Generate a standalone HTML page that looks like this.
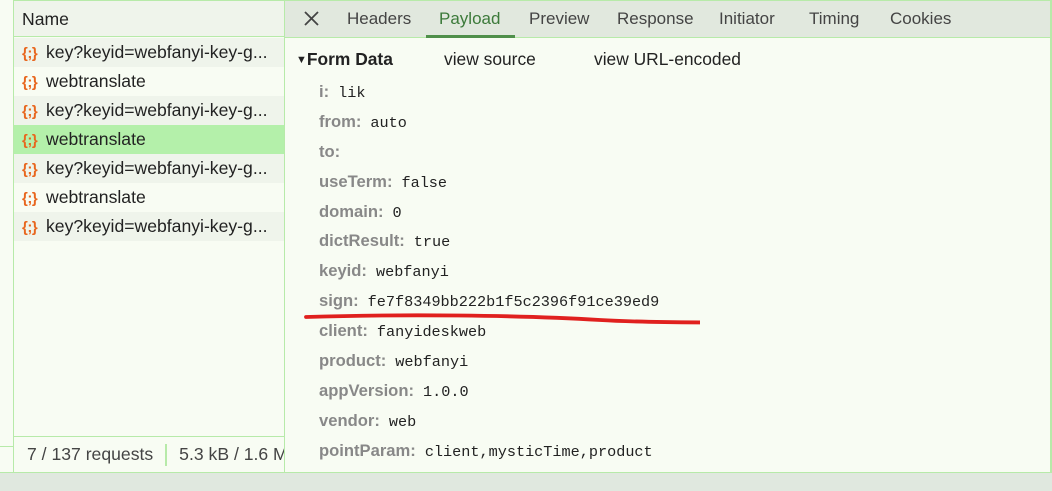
<!DOCTYPE html>
<html><head><meta charset="utf-8"><style>
*{margin:0;padding:0;box-sizing:border-box}
body{width:1052px;height:491px;overflow:hidden;background:#f8fcf3;font-family:"Liberation Sans",sans-serif;position:relative;color:#222}
.a{position:absolute}
.row{position:absolute;left:14px;width:270px;height:29px;font-size:17.6px;line-height:29px;padding-left:8px;white-space:nowrap;color:#222;overflow:hidden}
.row .ic{display:inline-block;width:24px;color:#e8661e;font-size:15px;font-weight:bold;letter-spacing:-0.5px}
.tab{position:absolute;top:0;height:37px;line-height:37px;font-size:17px;color:#444}
.k{position:absolute;left:319px;font-size:16.6px;font-weight:bold;color:#888;white-space:nowrap}
.k span{font-family:"Liberation Mono",monospace;font-weight:normal;color:#222;font-size:15.2px;margin-left:9px}
</style></head><body>
<div class="a" style="left:13px;top:0;width:272px;height:472px;border-left:1px solid #b7eaa9;border-right:1px solid #b7eaa9;border-top:1px solid #b7eaa9"></div>
<div class="a" style="left:14px;top:1px;width:270px;height:36px;background:#eff4eb;border-bottom:1px solid #b7eaa9;font-size:17.6px;line-height:36px;padding-left:8px">Name</div>
<div class="row" style="top:38px;background:#eff4eb"><span class="ic">{;}</span>key?keyid=webfanyi-key-g...</div>
<div class="row" style="top:67px;background:#f8fcf3"><span class="ic">{;}</span>webtranslate</div>
<div class="row" style="top:96px;background:#eff4eb"><span class="ic">{;}</span>key?keyid=webfanyi-key-g...</div>
<div class="row" style="top:125px;background:#b4f0aa"><span class="ic">{;}</span>webtranslate</div>
<div class="row" style="top:154px;background:#eff4eb"><span class="ic">{;}</span>key?keyid=webfanyi-key-g...</div>
<div class="row" style="top:183px;background:#f8fcf3"><span class="ic">{;}</span>webtranslate</div>
<div class="row" style="top:212px;background:#eff4eb"><span class="ic">{;}</span>key?keyid=webfanyi-key-g...</div>
<div class="a" style="left:0;top:446px;width:14px;border-top:1px solid #b7eaa9"></div>
<div class="a" style="left:14px;top:436px;width:270px;height:36px;border-top:1px solid #b7eaa9;font-size:17.6px;line-height:35px;color:#444;white-space:nowrap;overflow:hidden;padding-left:13px">7 / 137 requests<span style="display:inline-block;width:2px;height:22px;background:#b7eaa9;vertical-align:middle;margin:0 12px"></span>5.3 kB / 1.6 MB</div>
<div class="a" style="left:0;top:472px;width:1052px;height:19px;background:#e0e8df;border-top:1px solid #b7eaa9"></div>
<div class="a" style="left:285px;top:0;width:767px;height:38px;background:#e1e8de;border-top:1px solid #b7eaa9;border-bottom:1px solid #b7eaa9"></div>
<div class="a" style="left:1050px;top:0;width:2px;height:472px;background:#b7eaa9"></div>
<svg class="a" style="left:304px;top:11px" width="15" height="15"><path d="M1 1L14 14M14 1L1 14" stroke="#444" stroke-width="1.8"/></svg>
<div class="tab" style="left:347px">Headers</div>
<div class="tab" style="left:439px;color:#3c7a3a">Payload</div>
<div class="a" style="left:426px;top:35px;width:89px;height:3px;background:#4f8f4a"></div>
<div class="tab" style="left:529px">Preview</div>
<div class="tab" style="left:617px">Response</div>
<div class="tab" style="left:719px">Initiator</div>
<div class="tab" style="left:809px">Timing</div>
<div class="tab" style="left:890px">Cookies</div>
<div class="a" style="left:296px;top:49px;font-size:17.4px;font-weight:bold;color:#222;white-space:nowrap"><span style="font-size:11px;vertical-align:2px">▼</span>Form Data</div>
<div class="a" style="left:444px;top:49px;font-size:17.4px;color:#222">view source</div>
<div class="a" style="left:594px;top:49px;font-size:17.4px;color:#222">view URL-encoded</div>
<div class="k" style="top:82px">i:<span>lik</span></div>
<div class="k" style="top:112px">from:<span>auto</span></div>
<div class="k" style="top:142px">to:<span></span></div>
<div class="k" style="top:172px">useTerm:<span>false</span></div>
<div class="k" style="top:202px">domain:<span>0</span></div>
<div class="k" style="top:231px">dictResult:<span>true</span></div>
<div class="k" style="top:261px">keyid:<span>webfanyi</span></div>
<div class="k" style="top:291px">sign:<span>fe7f8349bb222b1f5c2396f91ce39ed9</span></div>
<div class="k" style="top:321px">client:<span>fanyideskweb</span></div>
<div class="k" style="top:351px">product:<span>webfanyi</span></div>
<div class="k" style="top:381px">appVersion:<span>1.0.0</span></div>
<div class="k" style="top:411px">vendor:<span>web</span></div>
<div class="k" style="top:441px">pointParam:<span>client,mysticTime,product</span></div>
<svg class="a" style="left:300px;top:310px" width="400" height="20"><path d="M6 7 C100 4 220 5 300 10 S600 11 688 12" stroke="#e0201e" stroke-width="3.8" fill="none" stroke-linecap="round"/></svg>
</body></html>
